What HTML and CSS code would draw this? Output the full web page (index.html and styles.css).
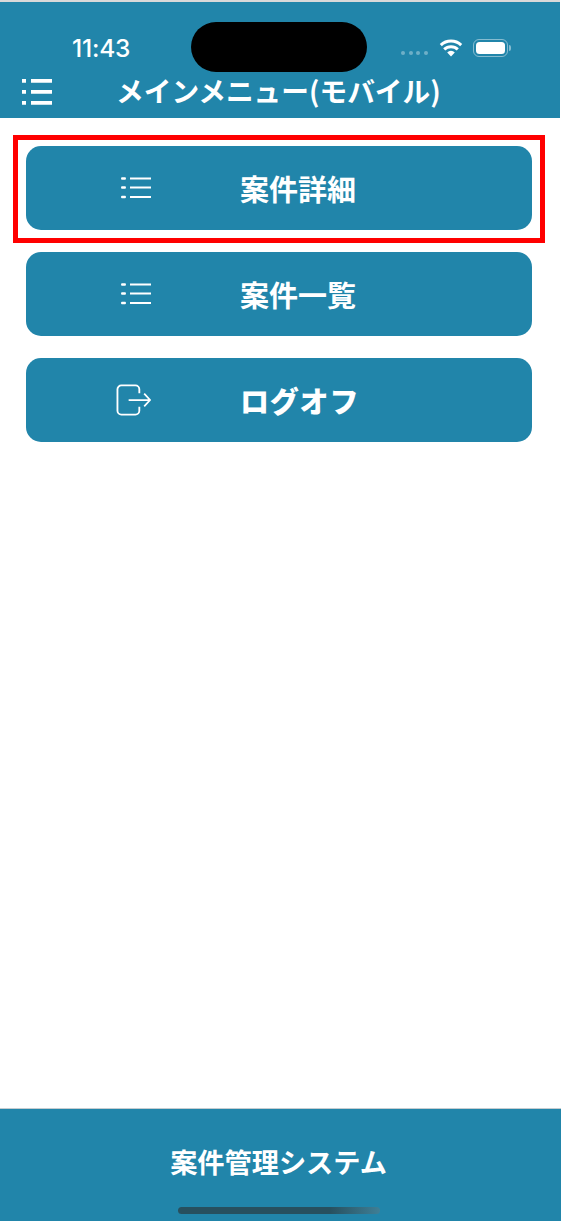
FILE: index.html
```html
<!DOCTYPE html>
<html lang="ja">
<head>
<meta charset="utf-8">
<title>メインメニュー(モバイル)</title>
<link rel="stylesheet" href="styles.css">
</head>
<body>
<div class="page">
  <header class="header">
    <div class="status">
      <span class="time">11:43</span>
      <span class="island"></span>
      <span class="signal"><i></i><i></i><i></i><i></i></span>
      <svg class="wifi" viewBox="0 0 24 18" aria-hidden="true">
        <path d="M12 17.5 8.2 13.4a5.4 5.4 0 0 1 7.6 0Z" fill="#fff"/>
        <path d="M5.2 10.4a9.8 9.8 0 0 1 13.6 0M1.8 6.2a14.8 14.8 0 0 1 20.4 0" fill="none" stroke="#fff" stroke-width="3"/>
      </svg>
      <span class="battery"><span class="battery-fill"></span></span>
      <span class="battery-nub"></span>
    </div>
    <div class="titlebar">
      <svg class="menu" viewBox="0 0 30 26" aria-hidden="true">
        <path d="M0 0h4v3.800H0zM9 0h21v3.800H9zM0 11h4v3.800H0zM9 11h21v3.800H9zM0 22h4v3.800H0zM9 22h21v3.800H9z" fill="#fff"/>
      </svg>
      <h1 class="title">メインメニュー(モバイル)</h1>
    </div>
  </header>
  <main class="menu-list">
    <div class="highlighted">
      <a class="btn">
        <svg class="icon-list" viewBox="0 0 30 22" aria-hidden="true">
          <path d="M9 1.500h21M9 10.500h21M9 20h21" stroke="#fff" stroke-width="2" fill="none"/>
          <path d="M0 1.500h4M0 10.500h4M0 20h4" stroke="#fff" stroke-width="2.600" stroke-linecap="round" fill="none" transform="translate(1 0) scale(.75 1)"/>
        </svg>
        <span class="btn-label">案件詳細</span>
      </a>
      <span class="highlight"></span>
    </div>
    <a class="btn">
      <svg class="icon-list" viewBox="0 0 30 22" aria-hidden="true">
        <path d="M9 1.500h21M9 10.500h21M9 20h21" stroke="#fff" stroke-width="2" fill="none"/>
        <path d="M0 1.500h4M0 10.500h4M0 20h4" stroke="#fff" stroke-width="2.600" stroke-linecap="round" fill="none" transform="translate(1 0) scale(.75 1)"/>
      </svg>
      <span class="btn-label">案件一覧</span>
    </a>
    <a class="btn">
      <svg class="icon-logout" viewBox="0 0 36 32" aria-hidden="true">
        <path d="M24 9V5a4 4 0 0 0-4-4H5.500a4 4 0 0 0-4 4v22a4 4 0 0 0 4 4H20a4 4 0 0 0 4-4v-4" fill="none" stroke="#fff" stroke-width="1.900"/>
        <path d="M13 16h22M29 9.500l6 6.500-6 6.500" fill="none" stroke="#fff" stroke-width="1.800"/>
      </svg>
      <span class="btn-label btn-label-wide">ログオフ</span>
    </a>
  </main>
  <footer class="footer">
    <span class="footer-title">案件管理システム</span>
    <span class="home-bar"></span>
  </footer>
</div>
</body>
</html>
```
FILE: styles.css
```css
* { box-sizing: border-box; }
html, body { margin: 0; padding: 0; background: #fff; }
body { font-family: "Noto Sans CJK JP", "Noto Sans", sans-serif; color: #fff; }
.page { width: 561px; height: 1221px; display: flex; flex-direction: column; overflow: hidden; }

.header { margin-top: 2px; margin-right: 1px; height: 116px; background: #2185aa; box-shadow: 0 -2px 0 #d9d9d9; display: flex; flex-direction: column; }
.status { height: 70px; padding: 20px 0 0 72px; display: flex; align-items: flex-start; }
.time { width: 119px; margin-top: 11px; font: 500 24.500px/30px Inter, Roboto, sans-serif; letter-spacing: -.2px; }
.island { width: 176px; height: 50px; border-radius: 25px; background: #000; }
.signal { display: flex; gap: 3.500px; margin: 29px 0 0 34px; }
.signal i { width: 4px; height: 4px; border-radius: 50%; background: rgba(255,255,255,.35); }
.wifi { width: 24px; height: 18px; margin: 17px 0 0 11px; }
.battery { width: 35px; height: 18px; margin: 17px 0 0 10px; padding: 2px; border: 1.500px solid rgba(255,255,255,.45); border-radius: 6px; display: flex; }
.battery-fill { flex: 1; background: #fff; border-radius: 3.500px; }
.battery-nub { width: 2px; height: 6px; margin: 23px 0 0 1px; background: rgba(255,255,255,.45); border-radius: 0 2px 2px 0; }

.titlebar { height: 46px; padding-left: 22px; display: flex; align-items: flex-start; }
.menu { width: 30px; height: 26px; margin-top: 7px; flex: none; }
.title { margin: -1px 0 0 64px; font-size: 27.700px; line-height: 38px; font-weight: 700; white-space: nowrap; }

.menu-list { flex: 1; padding: 28px 29px 0 26px; display: flex; flex-direction: column; gap: 22px; }
.highlighted { position: relative; }
.highlight { position: absolute; left: -13px; right: -13px; top: -11px; bottom: -13px; border: 5px solid #f00; pointer-events: none; }
.btn { height: 84px; background: #2185aa; border-radius: 15px; display: flex; align-items: center; position: relative; }
.icon-list { position: absolute; left: 95px; top: 31px; width: 30px; height: 22px; }
.icon-logout { position: absolute; left: 90px; top: 26px; width: 35px; height: 32px; }
.btn-label { margin-left: 214px; font-size: 29px; line-height: 40px; font-weight: 700; white-space: nowrap; }
.btn-label-wide { letter-spacing: .8px; font-weight: 900; }

.footer { height: 113px; padding-right: 4px; background: #2185aa; border-top: 1px solid #c4ccd0; display: flex; flex-direction: column; align-items: center; }
.footer-title { margin-top: 33px; font-size: 27.200px; line-height: 38px; font-weight: 700; white-space: nowrap; }
.home-bar { width: 202px; height: 7px; margin-top: 27px; border-radius: 4px; background: linear-gradient(90deg, #27505f 0%, #27505f 75%, #3f7f96 100%); }
```
